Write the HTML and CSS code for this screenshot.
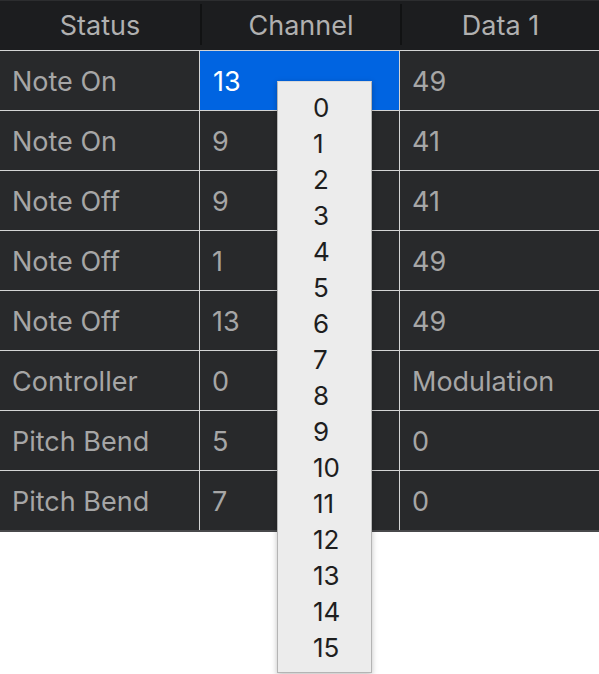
FILE: index.html
```html
<!DOCTYPE html>
<html>
<head>
<meta charset="utf-8">
<link rel="stylesheet" href="styles.css">
</head>
<body>
<div class="table">
  <div class="head">
    <div class="hcell">Status</div>
    <div class="hcell sep">Channel</div>
    <div class="hcell sep">Data 1</div>
  </div>
  <div class="row"><div class="cell">Note On</div><div class="cell line selected">13</div><div class="cell line">49</div></div>
  <div class="row"><div class="cell">Note On</div><div class="cell line">9</div><div class="cell line">41</div></div>
  <div class="row"><div class="cell">Note Off</div><div class="cell line">9</div><div class="cell line">41</div></div>
  <div class="row"><div class="cell">Note Off</div><div class="cell line">1</div><div class="cell line">49</div></div>
  <div class="row"><div class="cell">Note Off</div><div class="cell line">13</div><div class="cell line">49</div></div>
  <div class="row"><div class="cell">Controller</div><div class="cell line">0</div><div class="cell line">Modulation</div></div>
  <div class="row"><div class="cell">Pitch Bend</div><div class="cell line">5</div><div class="cell line">0</div></div>
  <div class="row"><div class="cell">Pitch Bend</div><div class="cell line">7</div><div class="cell line">0</div></div>
</div>
<ul class="menu">
  <li>0</li><li>1</li><li>2</li><li>3</li><li>4</li><li>5</li><li>6</li><li>7</li>
  <li>8</li><li>9</li><li>10</li><li>11</li><li>12</li><li>13</li><li>14</li><li>15</li>
</ul>
</body>
</html>
```
FILE: styles.css
```css
html, body {
  margin: 0;
  padding: 0;
  background: #ffffff;
}
body {
  font-family: Inter, "Liberation Sans", sans-serif;
  width: 599px;
  height: 674px;
  overflow: hidden;
  position: relative;
}
.table {
  width: 599px;
  background: #28292b;
  border-bottom: 2px solid #48494b;
}
.head {
  display: grid;
  grid-template-columns: 200px 200px 199px;
  height: 51px;
  box-sizing: border-box;
  background: #1c1d1f;
  border-top: 1px solid #2c2d2f;
  border-bottom: 1px solid #d4d4d4;
  padding-top: 3px;
}
.hcell {
  height: 41px;
  display: flex;
  align-items: center;
  justify-content: center;
  color: #b0b0b0;
  font-size: 27px;
  box-sizing: border-box;
  padding-top: 1px;
}
.hcell.sep {
  border-left: 2px solid #111213;
}
.row {
  display: grid;
  grid-template-columns: 199px 200px 200px;
  height: 60px;
  box-sizing: border-box;
  border-bottom: 1px solid #d4d4d4;
}
.row:last-child {
  border-bottom: none;
  height: 59px;
}
.cell {
  display: flex;
  align-items: center;
  padding-left: 12px;
  padding-top: 2px;
  color: #a6a6a6;
  font-size: 27px;
  box-sizing: border-box;
}
.cell.line {
  border-left: 1px solid #d4d4d4;
}
.cell.selected {
  background: #0064e1;
  color: #ffffff;
  padding-left: 13px;
}
.menu {
  position: absolute;
  left: 277px;
  top: 81px;
  width: 95px;
  height: 592px;
  box-sizing: border-box;
  margin: 0;
  padding: 8px 0 0 35px;
  list-style: none;
  background: #ececec;
  border: 1px solid #b4b4b4;
  border-top-color: #d8d8d8;
  box-shadow: 0 2px 6px rgba(0, 0, 0, 0.25);
}
.menu li {
  height: 36px;
  line-height: 36px;
  font-size: 26px;
  color: #1e1e1e;
}
```
